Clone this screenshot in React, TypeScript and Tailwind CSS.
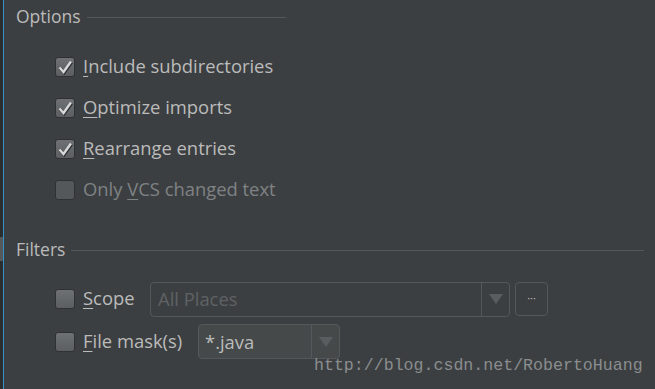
const font = { fontFamily: '"Open Sans", "Noto Sans", sans-serif' };

const Check = ({ checked, disabled }: { checked?: boolean; disabled?: boolean }) => (
  <span
    className={`w-[20px] h-[20px] rounded-[3px] border border-[#2f3133] flex items-center justify-center shrink-0 ${
      disabled ? 'bg-[#55585a]' : 'bg-gradient-to-b from-[#6e7173] to-[#5c5f61]'
    }`}
  >
    {checked && (
      <svg width="18" height="18" viewBox="0 0 18 18">
        <path d="M3.5 9.5 L7.5 14 L15 3.5" fill="none" stroke="#2a2c2e" strokeWidth="3.2" transform="translate(0.6 0.8)" />
        <path d="M3.5 9.5 L7.5 14 L15 3.5" fill="none" stroke="#d8d8d8" strokeWidth="2.4" />
      </svg>
    )}
  </span>
);

const Label = ({ mn, rest, pre = '', disabled }: { mn: string; rest: string; pre?: string; disabled?: boolean }) => (
  <span className={`text-[18.4px] leading-none ${disabled ? 'text-[#7f8284]' : 'text-[#bbbbbb]'}`}>
    {pre}
    <span className="underline underline-offset-[3px] decoration-1">{mn}</span>
    {rest}
  </span>
);

const Row = ({ children }: { children: React.ReactNode }) => (
  <div className="h-[41px] flex items-center gap-[8px] pl-[51px]">{children}</div>
);

const Arrow = ({ color = '#6b6e70' }: { color?: string }) => (
  <svg width="14" height="10" viewBox="0 0 14 10">
    <path d="M0 0 H14 L7 10 Z" fill={color} />
  </svg>
);

export default function App() {
  return (
    <div className="w-[655px] h-[389px] bg-[#3c3f41] flex overflow-hidden" style={font}>
      <div className="w-[3px] flex flex-col bg-[#2b2d2e]">
        <div className="mt-[237px] h-[24px] bg-[#55585a]" />
      </div>
      <div className="w-[1px] bg-[#3592c4]" />
      <div className="flex-1 flex flex-col relative">
        <div className="h-[22px] mt-[6px] flex items-center pl-[12px] gap-[6px] w-[282px]">
          <span className="text-[17.5px] text-[#bbbbbb] leading-none">Options</span>
          <div className="flex-1 h-px bg-[#55585a]" />
        </div>
        <div className="mt-[18px] flex flex-col">
          <Row>
            <Check checked />
            <Label mn="I" rest="nclude subdirectories" />
          </Row>
          <Row>
            <Check checked />
            <Label mn="O" rest="ptimize imports" />
          </Row>
          <Row>
            <Check checked />
            <Label mn="R" rest="earrange entries" />
          </Row>
          <Row>
            <Check disabled />
            <Label pre="Only " mn="V" rest="CS changed text" disabled />
          </Row>
        </div>
        <div className="h-[22px] mt-[29px] flex items-center pl-[12px] gap-[6px] pr-[11px]">
          <span className="text-[17.5px] text-[#bbbbbb] leading-none">Filters</span>
          <div className="flex-1 h-px bg-[#55585a]" />
        </div>
        <div className="mt-[20px] h-[36px] flex items-center pl-[51px]">
          <Check />
          <span className="ml-[8px] w-[67px]">
            <Label mn="S" rest="cope" />
          </span>
          <div className="w-[360px] h-[35px] border border-[#55585a] rounded-[4px] flex items-center">
            <span className="flex-1 pl-[7px] text-[18.4px] text-[#5f6264]">All Places</span>
            <div className="w-[28px] h-full border-l border-[#55585a] flex items-center justify-center">
              <Arrow color="#5a5d5f" />
            </div>
          </div>
          <div className="ml-[5px] w-[33px] h-[34px] border border-[#55585a] rounded-[4px] flex items-center justify-center text-[#bbbbbb] text-[11px] leading-none pb-[3px]">
            ···
          </div>
        </div>
        <div className="mt-[7px] h-[35px] flex items-center pl-[51px]">
          <Check />
          <span className="ml-[8px] w-[115px]">
            <Label mn="F" rest="ile mask(s)" />
          </span>
          <div className="w-[142px] h-[35px] border border-[#55585a] rounded-[4px] bg-[#45494a] flex items-center">
            <span className="flex-1 pl-[6px] text-[18.4px] text-[#bbbbbb]">*.java</span>
            <div className="w-[28px] h-full border-l border-[#55585a] flex items-center justify-center">
              <Arrow color="#5a5d5f" />
            </div>
          </div>
        </div>
        <span
          className="absolute left-[310px] top-[358px] text-[16.6px] leading-none text-[#8a8d8f]"
          style={{ fontFamily: '"Liberation Mono", monospace' }}
        >
          http://blog.csdn.net/RobertoHuang
        </span>
      </div>
    </div>
  );
}
